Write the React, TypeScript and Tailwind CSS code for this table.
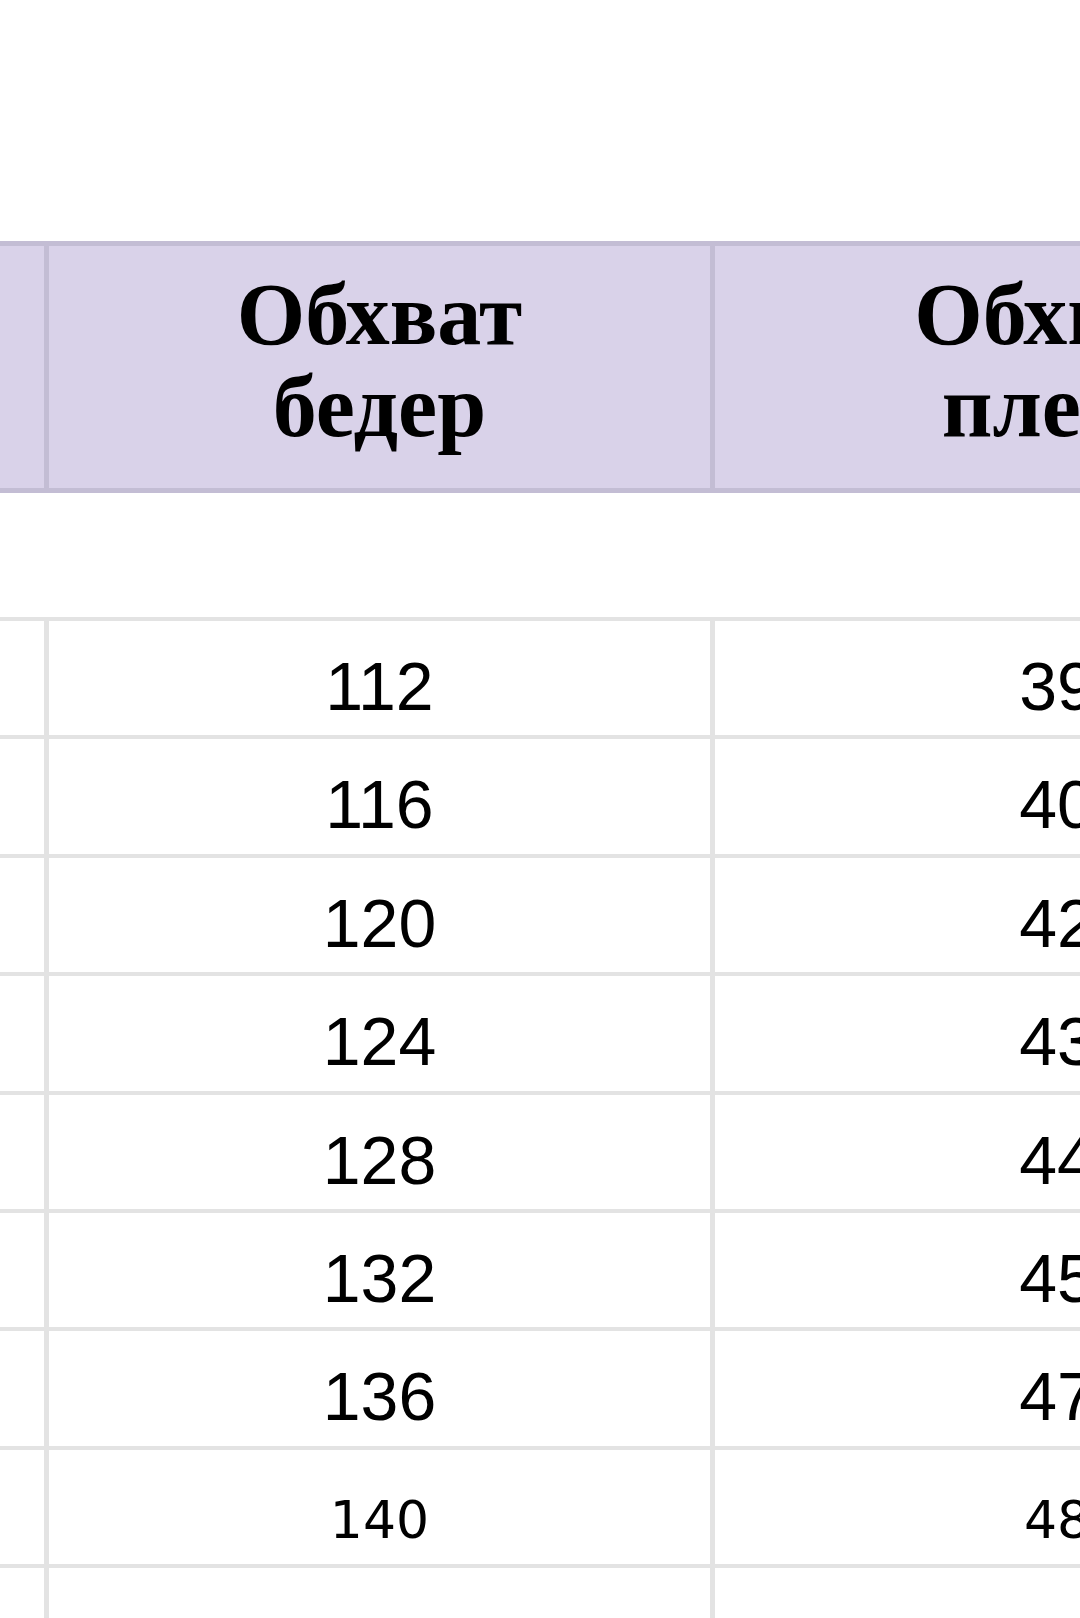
import React from "react";

const rows: { hips: string; arm: string; small?: boolean }[] = [
  { hips: "112", arm: "39" },
  { hips: "116", arm: "40" },
  { hips: "120", arm: "42" },
  { hips: "124", arm: "43" },
  { hips: "128", arm: "44" },
  { hips: "132", arm: "45" },
  { hips: "136", arm: "47" },
  { hips: "140", arm: "48", small: true },
];

function HeaderCell({ className, children }: { className: string; children?: React.ReactNode }) {
  return (
    <div
      className={`${className} shrink-0 h-full border-r-[5px] border-[#c3bdd4] pt-[23px] text-center text-[88px] leading-[92px] font-bold text-black`}
      style={{ fontFamily: '"Liberation Serif", "Times New Roman", serif' }}
    >
      {children}
    </div>
  );
}

function BodyRow({ hips, arm, small }: { hips?: string; arm?: string; small?: boolean }) {
  const textCls = small
    ? "pt-[32px] text-[52px] leading-[76px]"
    : "pt-[27px] text-[68px] leading-[76px]";
  const font = small
    ? '"DejaVu Sans", "Liberation Sans", sans-serif'
    : '"Liberation Sans", Arial, sans-serif';
  return (
    <div className="flex w-max h-[118.4px] border-t-4 border-[#e3e3e3]">
      <div className="w-[49px] shrink-0 h-full border-r-[5px] border-[#e3e3e3]" />
      <div
        className={`w-[666px] shrink-0 h-full border-r-[5px] border-[#e3e3e3] text-center text-black ${textCls}`}
        style={{ fontFamily: font }}
      >
        {hips}
      </div>
      <div
        className={`w-[689px] shrink-0 h-full border-r-[5px] border-[#e3e3e3] text-center text-black ${textCls}`}
        style={{ fontFamily: font }}
      >
        {arm}
      </div>
      <div className="w-[400px] shrink-0 h-full border-r-[5px] border-[#e3e3e3]" />
    </div>
  );
}

export default function App() {
  return (
    <div className="w-[1080px] h-[1618px] overflow-hidden bg-white">
      <div className="h-[241px]" />
      <div className="flex w-max h-[252px] border-y-[5px] border-[#c3bdd4] bg-[#d9d2e9]">
        <HeaderCell className="w-[49px]" />
        <HeaderCell className="w-[666px]">
          Обхват
          <br />
          бедер
        </HeaderCell>
        <HeaderCell className="w-[689px]">
          Обхват
          <br />
          плеча
        </HeaderCell>
        <HeaderCell className="w-[400px]" />
      </div>
      <div className="h-[124px]" />
      {rows.map((r) => (
        <BodyRow key={r.hips} hips={r.hips} arm={r.arm} small={r.small} />
      ))}
      <BodyRow />
    </div>
  );
}
